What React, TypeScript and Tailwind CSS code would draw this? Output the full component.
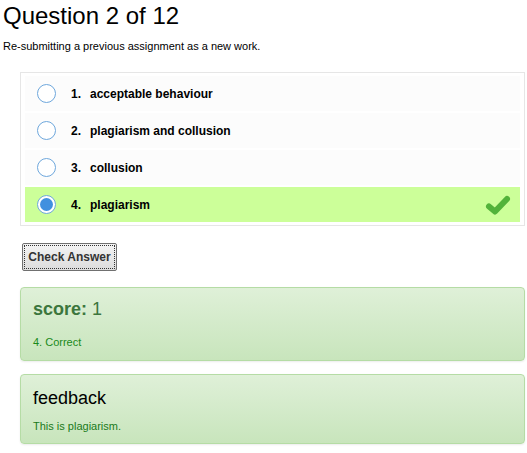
const options = [
  { n: 1, label: 'acceptable behaviour' },
  { n: 2, label: 'plagiarism and collusion' },
  { n: 3, label: 'collusion' },
  { n: 4, label: 'plagiarism' },
];

function Radio({ checked }: { checked: boolean }) {
  return (
    <span className="flex h-[19px] w-[19px] shrink-0 items-center justify-center rounded-full border-[1.5px] border-[#6ea7dc] bg-white">
      {checked && <span className="h-[13px] w-[13px] rounded-full bg-[#4190df]" />}
    </span>
  );
}

function Check() {
  return (
    <svg width="26" height="20" viewBox="0 0 26 20" className="shrink-0">
      <polyline
        points="4,11.5 10,16.5 22,4"
        fill="none"
        stroke="#52b33a"
        strokeWidth="6"
        strokeLinecap="round"
        strokeLinejoin="round"
      />
    </svg>
  );
}

export default function App() {
  const answer = 4;

  return (
    <div className="min-h-[453px] w-[527px] bg-white pl-[3px] pr-[2px] pt-[2px] font-['Liberation_Sans',Arial,sans-serif] text-black">
      <h1 className="text-[24px] leading-[28px]">Question 2 of 12</h1>
      <p className="mt-[9px] text-[11px] leading-[14px]">Re-submitting a previous assignment as a new work.</p>

      <div className="ml-[17px] mt-[19px] flex flex-col gap-[2px] border border-[#e6e6e6] px-[4px] py-[3px]">
        {options.map(o => (
          <div
            key={o.n}
            className={
              o.n === answer
                ? 'flex h-[35px] items-center bg-[#ccff99] pl-[12px] pr-[9px]'
                : 'flex h-[35px] items-center bg-[#fcfcfc] pl-[12px] pr-[9px]'
            }
          >
            <Radio checked={o.n === answer} />
            <span className="ml-[15px] w-[19px] text-[12px] font-bold">{o.n}.</span>
            <span className="text-[12px] font-bold">{o.label}</span>
            <span className="flex-1" />
            {o.n === answer && <Check />}
          </div>
        ))}
      </div>

      <button className="ml-[19px] mt-[17px] flex h-[28px] w-[95px] items-center justify-center rounded-[2px] border border-[#707070] bg-gradient-to-b from-[#f4f4f4] to-[#dcdcdc] text-[12px] font-bold text-[#333] outline-1 outline-offset-[-3px] outline-dotted outline-[#333]">
        Check Answer
      </button>

      <div className="ml-[17px] mt-[16px] h-[74px] rounded-[4px] border border-[#b5dca5] bg-gradient-to-b from-[#dff0d8] to-[#c8e5bc] px-[12px] pt-[10px] shadow-[0_1px_2px_rgba(0,0,0,0.08)]">
        <div className="text-[18px] leading-[22px] text-[#3c763d]">
          <span className="font-bold">score:</span> 1
        </div>
        <div className="mt-[15px] text-[11px] leading-[14px] text-[#1a8a1a]">4. Correct</div>
      </div>

      <div className="ml-[17px] mt-[13px] h-[70px] rounded-[4px] border border-[#b5dca5] bg-gradient-to-b from-[#dff0d8] to-[#c8e5bc] px-[12px] pt-[12px] shadow-[0_1px_2px_rgba(0,0,0,0.08)]">
        <div className="text-[18px] leading-[22px] text-black">feedback</div>
        <div className="mt-[10px] text-[11px] leading-[14px] text-[#1a7a1a]">This is plagiarism.</div>
      </div>
    </div>
  );
}
